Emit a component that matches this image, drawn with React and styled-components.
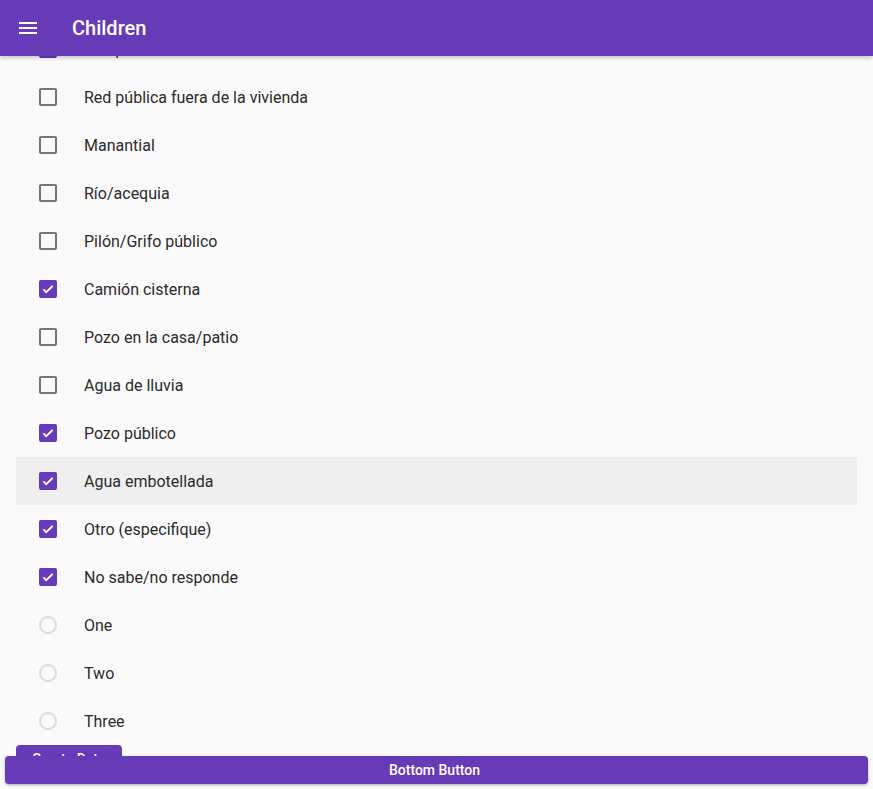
import { useLayoutEffect, useRef } from 'react'
import styled, { createGlobalStyle } from 'styled-components'

const GlobalStyle = createGlobalStyle`
  html, body, #root {
    margin: 0;
    height: 100%;
  }
  body {
    background: #fafafa;
    font-family: Roboto, "Noto Sans", sans-serif;
    color: #212121;
    overflow: hidden;
  }
`

const Screen = styled.div`
  position: relative;
  height: 100vh;
  display: flex;
  flex-direction: column;
  background: #fafafa;
`

const AppBar = styled.header`
  height: 56px;
  flex-shrink: 0;
  background: #673ab7;
  color: #fff;
  display: flex;
  align-items: center;
  padding: 0 16px;
  gap: 32px;
  box-shadow: 0 2px 4px rgba(0, 0, 0, 0.2);
  z-index: 2;
`

const Title = styled.h1`
  margin: 0;
  font-size: 20px;
  font-weight: 500;
`

const Scroller = styled.div`
  flex: 1;
  overflow: hidden;
`

const List = styled.div`
  padding: 0 16px;
`

const Row = styled.div`
  height: 48px;
  display: flex;
  align-items: center;
  gap: 27px;
  padding-left: 23px;
  font-size: 16px;
  color: #2b2b2b;
  background: ${p => (p.$active ? '#efefef' : 'transparent')};
`

const Box = styled.span`
  width: 18px;
  height: 18px;
  flex-shrink: 0;
  box-sizing: border-box;
  border-radius: 2px;
  border: 2px solid ${p => (p.$checked ? '#673ab7' : '#757575')};
  background: ${p => (p.$checked ? '#673ab7' : 'transparent')};
  display: flex;
  align-items: center;
  justify-content: center;
`

const Radio = styled.span`
  width: 18px;
  height: 18px;
  flex-shrink: 0;
  box-sizing: border-box;
  border-radius: 50%;
  border: 2px solid #dddddd;
`

const CreateButton = styled.button`
  margin: 0 16px 40px;
  height: 28px;
  padding: 0 16px;
  border: none;
  border-radius: 4px;
  background: #673ab7;
  color: #fff;
  font-family: Roboto, sans-serif;
  font-size: 14px;
  font-weight: 500;
`

const BottomButton = styled.button`
  position: absolute;
  left: 5px;
  right: 5px;
  bottom: 5px;
  height: 28px;
  padding: 0 4px 0 0;
  border: none;
  border-radius: 4px;
  background: #673ab7;
  color: #fff;
  font-family: Roboto, sans-serif;
  font-size: 14px;
  font-weight: 500;
  box-shadow: 0 1px 3px rgba(0, 0, 0, 0.3);
`

const MenuIcon = () => (
  <svg width="24" height="24" viewBox="0 0 24 24" fill="#fff">
    <path d="M3 18h18v-2H3v2zm0-5h18v-2H3v2zm0-7v2h18V6H3z" />
  </svg>
)

const Check = () => (
  <svg width="14" height="14" viewBox="0 0 24 24" fill="none" stroke="#fff" strokeWidth="3.2">
    <path d="M4 12.5l5 5L20 6.5" />
  </svg>
)

const options = [
  ['Red pública dentro de la vivienda', true],
  ['Red pública fuera de la vivienda', false],
  ['Manantial', false],
  ['Río/acequia', false],
  ['Pilón/Grifo público', false],
  ['Camión cisterna', true],
  ['Pozo en la casa/patio', false],
  ['Agua de lluvia', false],
  ['Pozo público', true],
  ['Agua embotellada', true],
  ['Otro (especifique)', true],
  ['No sabe/no responde', true],
]

const radios = ['One', 'Two', 'Three']

function App() {
  const scroller = useRef(null)

  useLayoutEffect(() => {
    scroller.current.scrollTop = 31
  }, [])

  return (
    <Screen>
      <GlobalStyle />
      <AppBar>
        <MenuIcon />
        <Title>Children</Title>
      </AppBar>
      <Scroller ref={scroller}>
        <List>
          {options.map(([label, checked]) => (
            <Row key={label} $active={label === 'Agua embotellada'}>
              <Box $checked={checked}>{checked && <Check />}</Box>
              {label}
            </Row>
          ))}
          {radios.map(label => (
            <Row key={label}>
              <Radio />
              {label}
            </Row>
          ))}
        </List>
        <CreateButton>Create Data</CreateButton>
      </Scroller>
      <BottomButton>Bottom Button</BottomButton>
    </Screen>
  )
}

export default App
